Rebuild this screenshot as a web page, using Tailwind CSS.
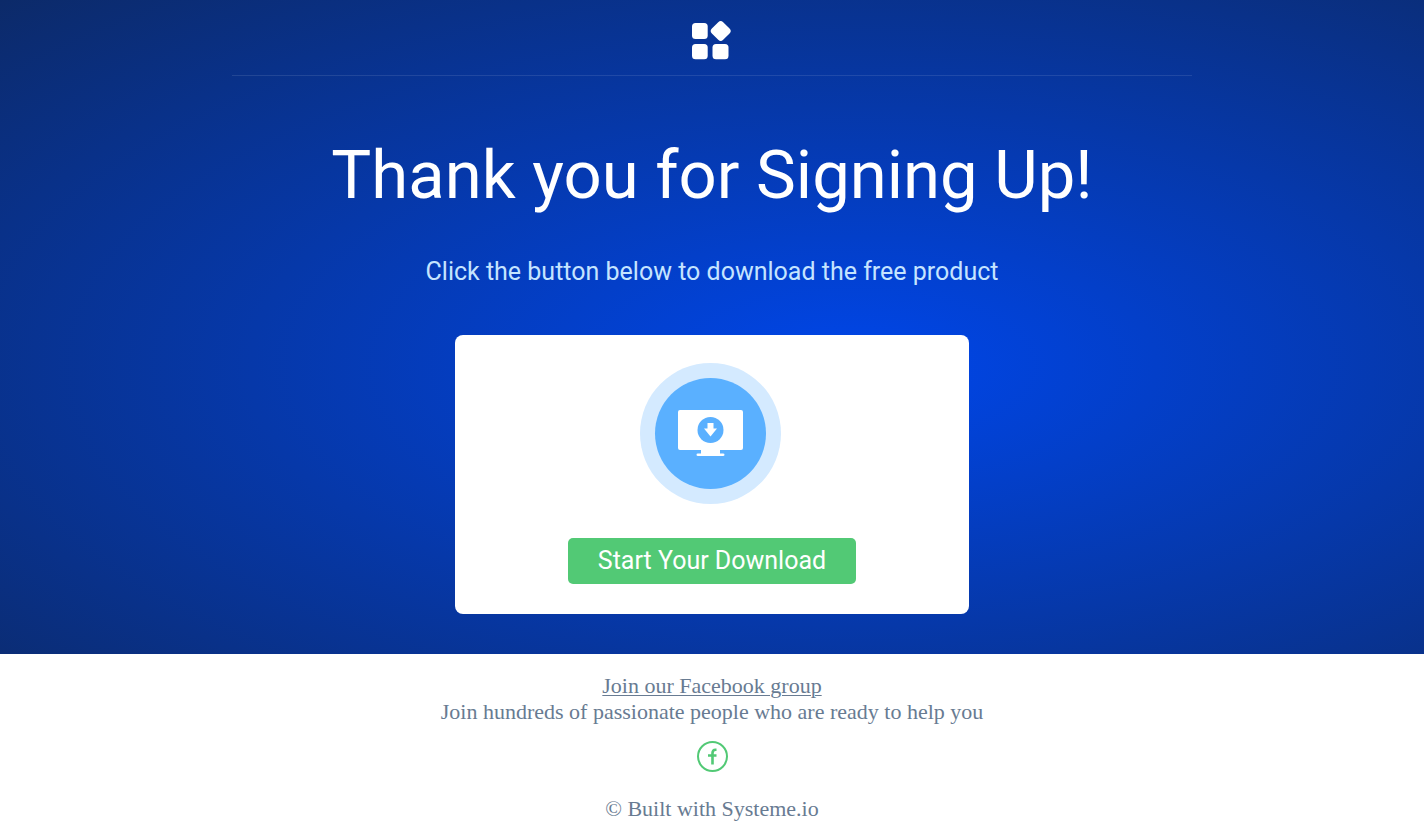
<!DOCTYPE html>
<html lang="en">
<head>
    <meta charset="UTF-8">
    <meta name="viewport" content="width=device-width, initial-scale=1.0">
    <title>Thank you for Signing Up!</title>
    <script src="https://cdn.jsdelivr.net/npm/@tailwindcss/browser@4"></script>
</head>
<body class="bg-white font-['Roboto',sans-serif]">
    <!-- Hero -->
    <main class="bg-[radial-gradient(at_60%_56%,#0046e9,#0c2a69)] px-4 pb-10">
        <header class="max-w-[960px] mx-auto h-[76px] pt-5 flex justify-center border-b border-white/10">
            <svg class="w-10 h-10" viewBox="0 0 40 40" fill="#fff" role="img" aria-label="Logo">
                <rect x="0" y="3" width="15.700" height="16" rx="3.500"/>
                <rect x="0" y="24" width="15.700" height="15.300" rx="3.500"/>
                <rect x="20.500" y="24" width="16" height="15.300" rx="3.500"/>
                <rect x="20.700" y="3" width="16" height="16" rx="3.500" transform="rotate(45 28.700 11)"/>
            </svg>
        </header>

        <div class="flex flex-col items-center text-center">
            <h1 class="mt-14 text-[67px] leading-[86px] text-white">Thank you for Signing Up!</h1>
            <p class="mt-9 text-[25px] leading-9 text-[#c5e4ff]">Click the button below to download the free product</p>

            <!-- Download card -->
            <div class="mt-[45px] w-full max-w-[514px] bg-white rounded-lg pt-7 pb-[30px] flex flex-col items-center">
                <svg class="w-[145px] h-[141px]" viewBox="0 0 145 141" aria-hidden="true">
                    <circle cx="70.5" cy="70.5" r="70.5" fill="#d4eaff"/>
                    <circle cx="70.5" cy="70.5" r="55.5" fill="#5ab0ff"/>
                    <path fill="#fff" d="M40 47h61q2 0 2 2v36q0 2-2 2H80v3.500h3q1.500 0 1.500 1.200t-1.500 1.300H58q-1.500 0-1.500-1.300t1.500-1.200h3V87H40q-2 0-2-2V49q0-2 2-2z"/>
                    <circle cx="70.500" cy="67" r="13" fill="#5ab0ff"/>
                    <path fill="#fff" d="M67.500 60h6v5.500h3.500l-6.500 8-6.500-8h3.500z"/>
                </svg>
                <button type="button" class="mt-[34px] h-[46px] w-72 rounded-[5px] bg-[#52c975] text-[25px] leading-9 text-white cursor-pointer">Start Your Download</button>
            </div>
        </div>
    </main>

    <!-- Footer -->
    <footer class="px-4 pt-[19px] pb-2 flex flex-col items-center text-center font-['Liberation_Serif',serif] text-[22px] leading-[26px] text-[#687b92]">
        <a href="#" class="underline underline-offset-2 decoration-1">Join our Facebook group</a>
        <p>Join hundreds of passionate people who are ready to help you</p>
        <a href="#" aria-label="Facebook" class="mt-4 w-[31px] h-[31px] rounded-full border-2 border-[#52c975] flex items-center justify-center">
            <svg class="w-[9px] h-[17px]" viewBox="0 0 9 17" fill="none" stroke="#52c975" stroke-width="2.600" aria-hidden="true">
                <path d="M8.500 1.800H7.500Q4.500 1.800 4.500 5v11.500M0 7.500h8.500"/>
            </svg>
        </a>
        <p class="mt-6">© Built with Systeme.io</p>
    </footer>
</body>
</html>
